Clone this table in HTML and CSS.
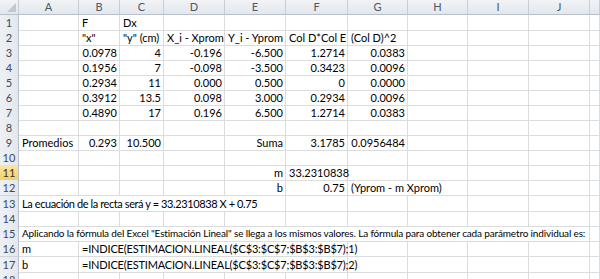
FILE: index.html
```html
<!DOCTYPE html>
<html lang="es">
<head>
<meta charset="utf-8">
<title>Hoja de cálculo</title>
<link rel="stylesheet" href="styles.css">
</head>
<body>
<div class="sheet">
  <div class="row hdr">
    <div class="h corner"><span class="tri"></span></div>
    <div class="h">A</div><div class="h">B</div><div class="h">C</div><div class="h">D</div><div class="h">E</div>
    <div class="h">F</div><div class="h">G</div><div class="h">H</div><div class="h">I</div><div class="h">J</div><div class="h"></div>
  </div>
  <div class="row">
    <div class="rh">1</div>
    <div class="c"></div><div class="c">F</div><div class="c">Dx</div><div class="c"></div><div class="c"></div>
    <div class="c"></div><div class="c"></div><div class="c"></div><div class="c"></div><div class="c"></div><div class="c"></div>
  </div>
  <div class="row">
    <div class="rh">2</div>
    <div class="c"></div><div class="c">"x"</div><div class="c">"y" (cm)</div><div class="c">X_i - Xprom</div><div class="c">Y_i - Yprom</div>
    <div class="c">Col D*Col E</div><div class="c">(Col D)^2</div><div class="c"></div><div class="c"></div><div class="c"></div><div class="c"></div>
  </div>
  <div class="row">
    <div class="rh">3</div>
    <div class="c"></div><div class="c r">0.0978</div><div class="c r">4</div><div class="c r">-0.196</div><div class="c r">-6.500</div>
    <div class="c r">1.2714</div><div class="c r">0.0383</div><div class="c"></div><div class="c"></div><div class="c"></div><div class="c"></div>
  </div>
  <div class="row">
    <div class="rh">4</div>
    <div class="c"></div><div class="c r">0.1956</div><div class="c r">7</div><div class="c r">-0.098</div><div class="c r">-3.500</div>
    <div class="c r">0.3423</div><div class="c r">0.0096</div><div class="c"></div><div class="c"></div><div class="c"></div><div class="c"></div>
  </div>
  <div class="row">
    <div class="rh">5</div>
    <div class="c"></div><div class="c r">0.2934</div><div class="c r">11</div><div class="c r">0.000</div><div class="c r">0.500</div>
    <div class="c r">0</div><div class="c r">0.0000</div><div class="c"></div><div class="c"></div><div class="c"></div><div class="c"></div>
  </div>
  <div class="row">
    <div class="rh">6</div>
    <div class="c"></div><div class="c r">0.3912</div><div class="c r">13.5</div><div class="c r">0.098</div><div class="c r">3.000</div>
    <div class="c r">0.2934</div><div class="c r">0.0096</div><div class="c"></div><div class="c"></div><div class="c"></div><div class="c"></div>
  </div>
  <div class="row">
    <div class="rh">7</div>
    <div class="c"></div><div class="c r">0.4890</div><div class="c r">17</div><div class="c r">0.196</div><div class="c r">6.500</div>
    <div class="c r">1.2714</div><div class="c r">0.0383</div><div class="c"></div><div class="c"></div><div class="c"></div><div class="c"></div>
  </div>
  <div class="row">
    <div class="rh">8</div>
    <div class="c"></div><div class="c"></div><div class="c"></div><div class="c"></div><div class="c"></div>
    <div class="c"></div><div class="c"></div><div class="c"></div><div class="c"></div><div class="c"></div><div class="c"></div>
  </div>
  <div class="row">
    <div class="rh">9</div>
    <div class="c">Promedios</div><div class="c r">0.293</div><div class="c r">10.500</div><div class="c"></div><div class="c r">Suma</div>
    <div class="c r">3.1785</div><div class="c r">0.0956484</div><div class="c"></div><div class="c"></div><div class="c"></div><div class="c"></div>
  </div>
  <div class="row">
    <div class="rh">10</div>
    <div class="c"></div><div class="c"></div><div class="c"></div><div class="c"></div><div class="c"></div>
    <div class="c"></div><div class="c"></div><div class="c"></div><div class="c"></div><div class="c"></div><div class="c"></div>
  </div>
  <div class="row">
    <div class="rh sel">11</div>
    <div class="c"></div><div class="c"></div><div class="c"></div><div class="c"></div><div class="c r">m</div>
    <div class="c r">33.2310838</div><div class="c"></div><div class="c"></div><div class="c"></div><div class="c"></div><div class="c"></div>
  </div>
  <div class="row tall">
    <div class="rh">12</div>
    <div class="c"></div><div class="c"></div><div class="c"></div><div class="c"></div><div class="c r">b</div>
    <div class="c r">0.75</div><div class="c s2">(Yprom - m Xprom)</div><div class="c"></div><div class="c"></div><div class="c"></div>
  </div>
  <div class="row">
    <div class="rh">13</div>
    <div class="c s5 tight">La ecuación de la recta será y = 33.2310838 X + 0.75</div>
    <div class="c"></div><div class="c"></div><div class="c"></div><div class="c"></div><div class="c"></div><div class="c"></div>
  </div>
  <div class="row">
    <div class="rh">14</div>
    <div class="c"></div><div class="c"></div><div class="c"></div><div class="c"></div><div class="c"></div>
    <div class="c"></div><div class="c"></div><div class="c"></div><div class="c"></div><div class="c"></div><div class="c"></div>
  </div>
  <div class="row">
    <div class="rh">15</div>
    <div class="c s10 small">Aplicando la fórmula del Excel "Estimación Lineal" se llega a los mismos valores. La fórmula para obtener cada parámetro individual es:</div>
    <div class="c"></div>
  </div>
  <div class="row tall">
    <div class="rh">16</div>
    <div class="c">m</div><div class="c s5 formula">=INDICE(ESTIMACION.LINEAL($C$3:$C$7;$B$3:$B$7);1)</div>
    <div class="c"></div><div class="c"></div><div class="c"></div><div class="c"></div><div class="c"></div>
  </div>
  <div class="row">
    <div class="rh">17</div>
    <div class="c">b</div><div class="c s5 formula">=INDICE(ESTIMACION.LINEAL($C$3:$C$7;$B$3:$B$7);2)</div>
    <div class="c"></div><div class="c"></div><div class="c"></div><div class="c"></div><div class="c"></div>
  </div>
  <div class="row">
    <div class="rh">18</div>
    <div class="c"></div><div class="c"></div><div class="c"></div><div class="c"></div><div class="c"></div>
    <div class="c"></div><div class="c"></div><div class="c"></div><div class="c"></div><div class="c"></div><div class="c"></div>
  </div>
</div>
</body>
</html>
```
FILE: styles.css
```css
html, body {
  margin: 0;
  padding: 0;
  background: #ffffff;
}
body {
  width: 600px;
  height: 279px;
  overflow: hidden;
  font-family: Lato, "Liberation Sans", sans-serif;
  font-size: 11px;
  color: #000;
}
.sheet {
  display: flex;
  flex-direction: column;
  width: 600px;
  overflow: hidden;
}
.row {
  display: grid;
  grid-template-columns: 19px 60px 41px 44px 61px 61px 62px 60px 60px 61px 61px 1fr;
  height: 15px;
  flex: none;
}
.row.tall {
  height: 16px;
}
.h {
  box-sizing: border-box;
  background: linear-gradient(#f1f3f6, #e3e7ec);
  border-right: 1px solid #c9ced6;
  border-bottom: 1px solid #b9c0c9;
  color: #4a5868;
  text-align: center;
  line-height: 14px;
  font-size: 11px;
}
.corner {
  position: relative;
}
.tri {
  position: absolute;
  right: 2px;
  bottom: 2px;
  width: 0;
  height: 0;
  border-left: 9px solid transparent;
  border-bottom: 9px solid #c3c8cf;
}
.rh {
  box-sizing: border-box;
  background: linear-gradient(90deg, #eef1f4, #e4e8ed);
  border-right: 1px solid #b9c0c9;
  border-bottom: 1px solid #cfd4da;
  color: #3b4a5c;
  text-align: center;
  line-height: 15px;
  font-size: 11px;
}
.rh.sel {
  background: linear-gradient(#fbe6a6, #f6cf63);
  border-bottom-color: #e0b84c;
  color: #333;
}
.c {
  box-sizing: border-box;
  border-right: 1px solid #dadcdd;
  border-bottom: 1px solid #dadcdd;
  padding: 0 2px 0 3px;
  line-height: 15px;
  white-space: nowrap;
  overflow: visible;
}
.c.r {
  text-align: right;
  padding-right: 2px;
}
.s2 { grid-column: span 2; }
.s5 { grid-column: span 5; }
.s10 { grid-column: span 10; }
.tight {
  letter-spacing: -0.4px;
}
.formula {
  letter-spacing: -0.18px;
}
.small {
  font-size: 10px;
  letter-spacing: -0.15px;
}
```
